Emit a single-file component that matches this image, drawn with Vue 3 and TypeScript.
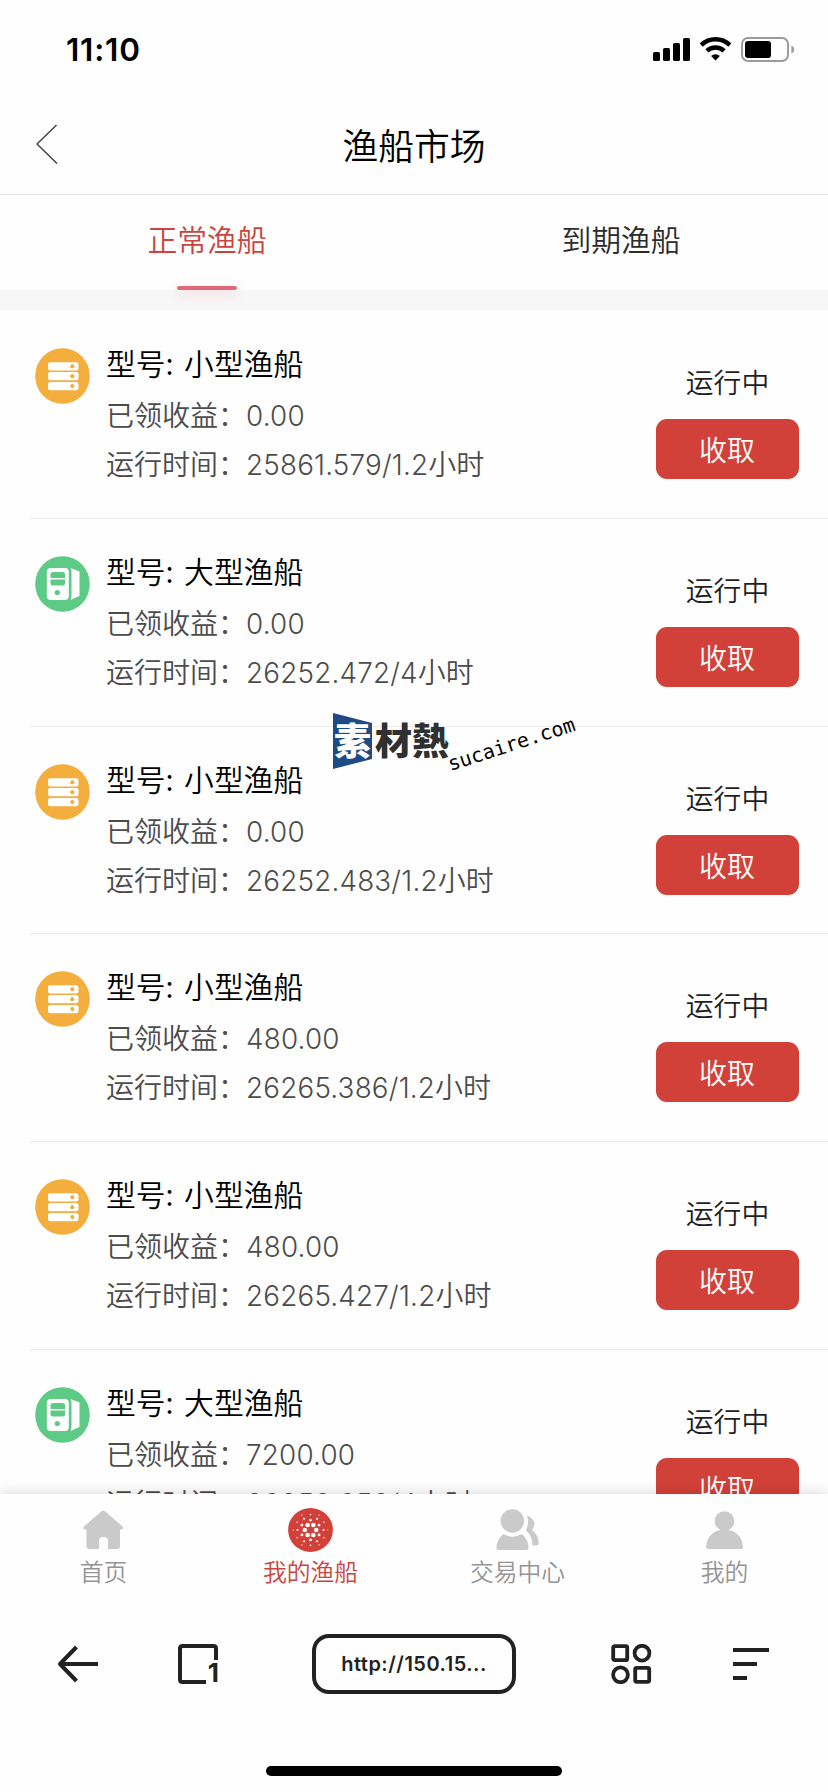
<script setup lang="ts">
interface Boat {
  kind: 'small' | 'large'
  income: string
  time: string
}

const boats: Boat[] = [
  { kind: 'small', income: '0.00', time: '25861.579/1.2' },
  { kind: 'large', income: '0.00', time: '26252.472/4' },
  { kind: 'small', income: '0.00', time: '26252.483/1.2' },
  { kind: 'small', income: '480.00', time: '26265.386/1.2' },
  { kind: 'small', income: '480.00', time: '26265.427/1.2' },
  { kind: 'large', income: '7200.00', time: '26252.656/4' },
]

const names = { small: '小型渔船', large: '大型渔船' }

// Six-fold rings of dots inside the active tab badge
interface Dot { x: number; y: number; r: number }
const ring = (radius: number, r: number, offset: number): Dot[] =>
  Array.from({ length: 6 }, (_, i) => {
    const a = ((offset + 60 * i) * Math.PI) / 180
    return { x: 22.5 + radius * Math.cos(a), y: 22 + radius * Math.sin(a), r }
  })
const dots: Dot[] = [
  ...ring(5.7, 2.3, 0),
  ...ring(9.9, 1.4, 30),
  ...ring(13, 1.1, 0),
  ...ring(15.4, 0.8, 30),
  ...ring(17.2, 0.6, 0),
]
</script>

<template>
  <div class="screen">
    <header class="status">
      <span class="clock">11:10</span>
      <svg class="indicators" width="142" height="26" viewBox="0 0 142 26">
        <rect x="0" y="15" width="7" height="9" rx="1.6" />
        <rect x="10" y="11" width="7" height="13" rx="1.6" />
        <rect x="20" y="6" width="7" height="18" rx="1.6" />
        <rect x="30" y="1" width="7" height="23" rx="1.6" />
        <g fill="none" stroke="#000" stroke-width="4.4">
          <path d="M48.2 8.1A20.5 20.5 0 0 1 76.8 8.1" />
          <path d="M53.9 13.9A12.4 12.4 0 0 1 71.1 13.9" />
        </g>
        <path d="M58.1 19A6.2 6.2 0 0 1 66.9 19L62.5 23.6Z" />
        <rect x="89" y="1" width="46" height="23" rx="6" fill="none" stroke="#9b9b9b" stroke-width="2" />
        <rect x="92" y="4" width="26" height="17" rx="3" />
        <path d="M138.400 8.500Q141.200 9.600 141.200 12.500T138.400 16.500Z" fill="#9b9b9b" />
      </svg>
    </header>

    <div class="navbar">
      <svg class="back" width="22" height="40" viewBox="0 0 22 40">
        <path d="M20.500 1 1 20 21 39.500" fill="none" stroke="#444" stroke-width="1.500" />
      </svg>
      <h1>渔船市场</h1>
    </div>

    <nav class="tabs">
      <a class="tab active">正常渔船</a>
      <a class="tab">到期渔船</a>
    </nav>

    <main class="list">
      <article v-for="(boat, i) in boats" :key="i" class="row">
        <svg v-if="boat.kind === 'small'" class="icon" viewBox="0 0 55 56">
          <ellipse cx="27.500" cy="28" rx="27.300" ry="27.800" fill="#f3ae3d" />
          <g v-for="n in 3" :key="n">
            <rect x="13" :y="4.300 + n * 9.900" width="30.500" height="8.200" rx="2.200" fill="#fff" />
            <circle cx="37.300" :cy="8.400 + n * 9.900" r="2.100" fill="#f3ae3d" />
          </g>
        </svg>
        <svg v-else class="icon" viewBox="0 0 55 56">
          <ellipse cx="27.500" cy="28" rx="27.300" ry="27.800" fill="#5dca86" />
          <rect x="11.800" y="12" width="22" height="32" rx="4" fill="#fff" />
          <path d="M15.500 22v-3.500q0-2.500 2.500-2.500h9.500q2.500 0 2.500 2.500V22zM15.500 23.500h14.500v4q0 2-2 2h-10.500q-2 0-2-2z" fill="#5dca86" />
          <circle cx="22.300" cy="36.500" r="2.600" fill="#5dca86" />
          <path d="M35.500 12 44.500 15.500V40L35.500 44Q36.500 42 36.500 39V16Q36.500 13.500 35.500 12Z" fill="#fff" />
        </svg>
        <div class="info">
          <h2>型号<span class="colon">:</span>{{ names[boat.kind] }}</h2>
          <p>已领收益：<span class="num">{{ boat.income }}</span></p>
          <p>运行时间：<span class="num">{{ boat.time }}</span>小时</p>
        </div>
        <div class="side">
          <span class="state">运行中</span>
          <button type="button">收取</button>
        </div>
      </article>
    </main>

    <div class="watermark">
      <svg class="mark" width="40" height="58" viewBox="0 0 40 58">
        <path d="M0 1 39 11V47L0 57Z" fill="#1e4b83" />
      </svg>
      <span class="brand"><b>素</b>材熱</span>
      <span class="domain">sucaire.com</span>
    </div>

    <footer class="bottom">
      <nav class="menu">
        <a class="item">
          <svg width="45" height="45" viewBox="0 0 45 45">
            <path d="M20.500 3.200Q22.200 1.800 24 3.200L41.500 18.500Q43.500 21 40.500 21.500H39V38Q39 41 36 41H27V32.500Q27 29 22.500 29T18 32.500V41H8.500Q5.500 41 5.500 38V21.500H4Q1 21 3 18.500Z" fill="#cacaca" />
          </svg>
          首页
        </a>
        <a class="item on">
          <svg width="45" height="45" viewBox="0 0 45 45">
            <ellipse cx="22.500" cy="22" rx="22.400" ry="22" fill="#d24139" />
            <circle v-for="(d, i) in dots" :key="i" :cx="d.x" :cy="d.y" :r="d.r" fill="#fff" />
          </svg>
          我的渔船
        </a>
        <a class="item">
          <svg width="45" height="45" viewBox="0 0 45 45">
            <g fill="#cacaca">
              <circle cx="17.300" cy="13" r="11.700" />
              <path d="M8.500 26Q17.500 31.500 27 26Q33.500 32 33.500 40Q33.500 42 31.500 42H3.500Q1.300 42 1.300 40Q2 31 8.500 26Z" />
              <path d="M32 7.500Q38.500 10.500 39.500 15Q39.500 19 37 22Q43.500 27 43.800 35Q44 37.500 41.500 37.500H37.500Q37.500 28 31 22.500Q34.500 15 32 7.500Z" />
            </g>
          </svg>
          交易中心
        </a>
        <a class="item">
          <svg width="45" height="45" viewBox="0 0 45 45">
            <g fill="#cacaca">
              <circle cx="22.500" cy="13" r="9.800" />
              <path d="M14.500 23Q22.500 20.500 30.500 23Q40 27 41 38.500Q41 41 38.500 41H6.500Q4 41 4 38.500Q5 27 14.500 23Z" />
            </g>
          </svg>
          我的
        </a>
      </nav>

      <div class="toolbar">
        <svg class="tool arrow" width="42" height="40" viewBox="0 0 42 40">
          <path d="M19.500 3 3 20 19.500 37M3 20H41" fill="none" stroke="#222" stroke-width="4" stroke-linejoin="round" />
        </svg>
        <div class="tool windows">
          <svg width="42" height="40" viewBox="0 0 42 40">
            <path d="M28 38H4.500Q2 38 2 35.500V4.500Q2 2 4.500 2H35.500Q38 2 38 4.500V16" fill="none" stroke="#222" stroke-width="4" />
          </svg>
          <span class="count">1</span>
        </div>
        <div class="address">http://150.15...</div>
        <svg class="tool grid" width="42" height="40" viewBox="0 0 42 40">
          <g fill="none" stroke="#222" stroke-width="3.800">
            <rect x="2.200" y="2.200" width="14" height="14" rx="1.500" />
            <circle cx="31" cy="9.200" r="7.400" />
            <circle cx="9.500" cy="30.800" r="7.400" />
            <rect x="24.200" y="23.800" width="14" height="14" rx="1.500" />
          </g>
        </svg>
        <svg class="tool lines" width="36" height="32" viewBox="0 0 36 32">
          <path d="M0 0H36V4H0ZM0 14H24V18H0ZM0 28H14V32H0Z" fill="#222" />
        </svg>
      </div>
      <div class="home"></div>
    </footer>
  </div>
</template>

<style>
body {
  background: #fff;
}
</style>

<style scoped>
.screen {
  position: relative;
  display: flex;
  flex-direction: column;
  width: 828px;
  height: 1792px;
  overflow: hidden;
  background: #fefefe;
  color: #000;
  font-family: "Noto Sans CJK SC", sans-serif;
  font-weight: 350;
}
.status {
  display: flex;
  flex: none;
  justify-content: space-between;
  height: 98px;
  box-sizing: border-box;
  padding: 31px 33px 0 66px;
}
.clock {
  font: 600 31.500px/38px Inter, sans-serif;
  letter-spacing: 0.800px;
}
.indicators {
  margin-top: 6px;
}
.navbar {
  display: grid;
  grid-template-columns: 100px 1fr 100px;
  flex: none;
  align-items: center;
  height: 97px;
  box-sizing: border-box;
  border-bottom: 1px solid #e8e8e8;
}
.back {
  margin-left: 36px;
  margin-bottom: 5px;
}
h1 {
  margin: 0 0 5px;
  font-size: 35.800px;
  line-height: 48px;
  font-weight: 350;
  text-align: center;
}
.tabs {
  display: flex;
  flex: none;
  height: 95px;
  border-bottom: 20px solid #f7f7f7;
}
.tab {
  display: flex;
  flex: 1;
  flex-direction: column;
  align-items: center;
  padding-top: 23px;
  color: #2b2b2b;
  font-size: 29.800px;
  line-height: 40px;
}
.tab.active {
  color: #c9453e;
}
.tab.active::after {
  content: "";
  flex: none;
  width: 60px;
  height: 4px;
  margin-top: 28px;
  border-radius: 2px;
  background: #e56778;
  box-shadow: 0 4px 12px rgba(229, 103, 120, 0.28);
}
.list {
  flex: 1;
  min-height: 0;
  padding-top: 1px;
  overflow: hidden;
}
.row {
  display: flex;
  height: 207.750px;
  box-sizing: border-box;
  margin-left: 30px;
  padding: 37px 29px 0 5px;
  border-bottom: 1px solid #ececec;
}
.icon {
  flex: none;
  width: 55px;
  height: 56px;
}
.info {
  flex: 1;
  padding-left: 16px;
  margin-top: -8px;
}
h2 {
  margin: 0 0 6px;
  font-size: 29.800px;
  font-weight: 350;
  line-height: 44px;
  white-space: nowrap;
}
.colon {
  display: inline-block;
  width: 18.500px;
}
p {
  height: 49px;
  margin: 0;
  color: #4c4c4c;
  font-size: 28px;
  line-height: 49px;
  white-space: nowrap;
}
.num {
  font-family: Inter, sans-serif;
  font-weight: 350;
  font-size: 27.800px;
  line-height: 1;
  letter-spacing: 0.200px;
}
.side {
  display: flex;
  flex-direction: column;
  align-items: center;
  width: 143px;
}
.state {
  margin-top: 13px;
  color: #1f1f1f;
  font-size: 27.800px;
  line-height: 40px;
}
button {
  width: 143px;
  height: 60px;
  margin-top: 18px;
  padding: 0 1px 0 0;
  border: 0;
  border-radius: 11px;
  background: #d24139;
  color: #fff;
  font: 350 28px/58px "Noto Sans CJK SC", sans-serif;
}
.watermark {
  position: absolute;
  left: 333px;
  top: 712px;
  width: 250px;
  height: 60px;
}
.mark,
.brand,
.domain {
  position: absolute;
  left: 0;
  top: 0;
}
.brand {
  left: 1px;
  top: 3px;
  color: #303030;
  font-size: 37px;
  line-height: 48px;
  font-weight: 900;
  white-space: nowrap;
}
.brand b {
  margin-right: 4px;
  color: #fff;
  font-weight: 900;
}
.domain {
  left: 112px;
  top: 17px;
  font: 20px/30px "DejaVu Sans Mono", monospace;
  transform: rotate(-18deg);
}
.bottom {
  position: absolute;
  left: 0;
  right: 0;
  bottom: 0;
  height: 298px;
  background: #fefefe;
  box-shadow: 0 0 14px rgba(0, 0, 0, 0.16);
}
.menu {
  display: flex;
  height: 106px;
}
.item {
  display: flex;
  flex: 1;
  flex-direction: column;
  align-items: center;
  padding-top: 14px;
  color: #949494;
  font-size: 23.800px;
  line-height: 35px;
}
.item.on {
  color: #c9453e;
}
.toolbar {
  display: flex;
  align-items: center;
  height: 60px;
  margin-top: 34px;
  padding-left: 57px;
}
.tool {
  flex: none;
}
.windows {
  position: relative;
  width: 42px;
  height: 40px;
  margin-left: 79px;
}
.count {
  position: absolute;
  right: 1px;
  bottom: -2px;
  color: #222;
  font: 700 26px/26px Inter, sans-serif;
}
.address {
  flex: none;
  width: 204px;
  height: 60px;
  box-sizing: border-box;
  margin-left: 92px;
  border: 4px solid #222;
  border-radius: 17px;
  color: #222;
  font: 600 20px/52px Inter, sans-serif;
  letter-spacing: 0.5px;
  text-align: center;
}
.grid {
  margin-left: 95px;
}
.lines {
  margin-left: 80px;
}
.home {
  width: 296px;
  height: 10px;
  margin: 72px auto 0;
  border-radius: 5px;
  background: #000;
}
</style>
